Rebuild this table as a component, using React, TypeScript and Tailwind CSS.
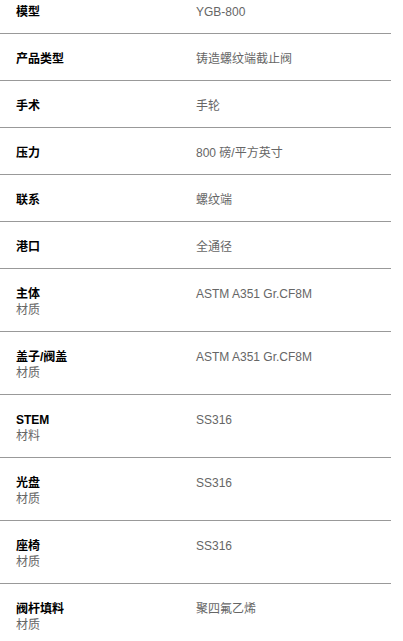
const rows: { label: string; sub?: string; value: string }[] = [
  { label: "模型", value: "YGB-800" },
  { label: "产品类型", value: "铸造螺纹端截止阀" },
  { label: "手术", value: "手轮" },
  { label: "压力", value: "800 磅/平方英寸" },
  { label: "联系", value: "螺纹端" },
  { label: "港口", value: "全通径" },
  { label: "主体", sub: "材质", value: "ASTM A351 Gr.CF8M" },
  { label: "盖子/阀盖", sub: "材质", value: "ASTM A351 Gr.CF8M" },
  { label: "STEM", sub: "材料", value: "SS316" },
  { label: "光盘", sub: "材质", value: "SS316" },
  { label: "座椅", sub: "材质", value: "SS316" },
  { label: "阀杆填料", sub: "材质", value: "聚四氟乙烯" },
];

export default function App() {
  return (
    <div className="h-[641px] overflow-hidden bg-white font-['Liberation_Sans','Noto_Sans_CJK_SC',sans-serif] text-[12px] leading-4">
      <div className="w-[391px] -mt-[13px]">
        {rows.map((r, i) => (
          <div
            key={i}
            className="flex pt-[17px] pb-[13px] pl-4 border-b border-[#999999]"
          >
            <div className="w-[180px] shrink-0">
              <div className="h-4 font-bold text-black">{r.label}</div>
              {r.sub && <div className="h-4 text-[#666666]">{r.sub}</div>}
            </div>
            <div className="h-4 text-[#666666]">{r.value}</div>
          </div>
        ))}
      </div>
    </div>
  );
}
